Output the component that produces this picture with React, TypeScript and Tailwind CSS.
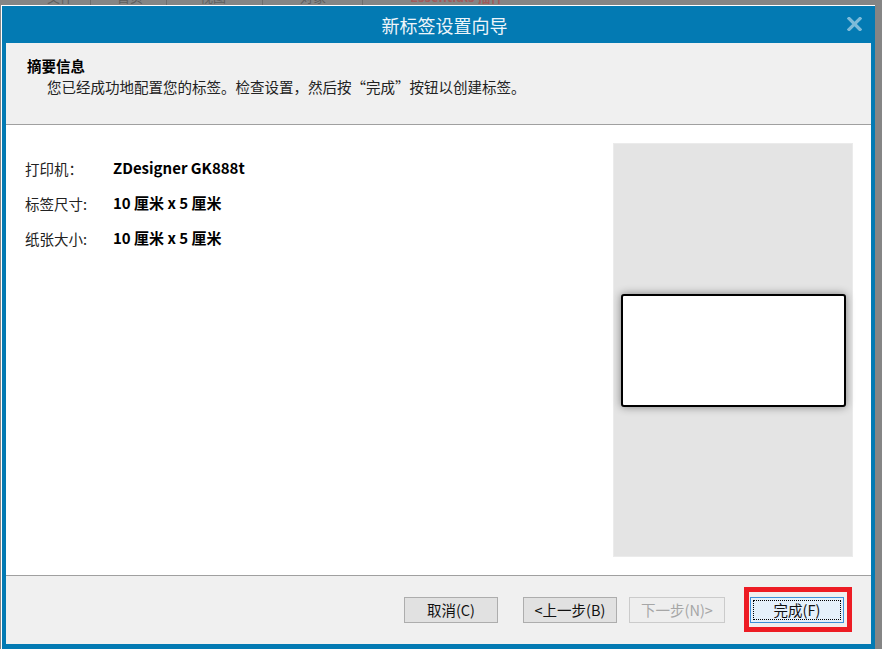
const font = { fontFamily: '"Noto Sans CJK SC", "Noto Sans", sans-serif' };

const rows = [
  { label: "打印机：", value: "ZDesigner GK888t" },
  { label: "标签尺寸:", value: "10 厘米 x 5 厘米" },
  { label: "纸张大小:", value: "10 厘米 x 5 厘米" },
];

function CloseIcon() {
  return (
    <svg width="15" height="14" viewBox="0 0 15 14" aria-hidden>
      <path d="M2 1.5 L13 12.5 M13 1.5 L2 12.5" stroke="#7ebbd9" strokeWidth="3.2" strokeLinecap="square" />
    </svg>
  );
}

function Button({
  children,
  disabled,
  focused,
}: {
  children: React.ReactNode;
  disabled?: boolean;
  focused?: boolean;
}) {
  return (
    <button
      className={
        focused
          ? "relative h-[26px] w-[94px] border border-[#3c8fd9] bg-[#e5f1fb] text-[14.5px] text-[#111]"
          : disabled
          ? "h-[26px] w-[96px] border border-[#cbcbcb] bg-[#eeeeee] text-[14.5px] text-[#a6a6a6]"
          : "h-[26px] w-[94px] border border-[#adadad] bg-[#e1e1e1] text-[14.5px] text-[#111]"
      }
    >
      {focused && (
        <span className="pointer-events-none absolute inset-[2px] border border-dotted border-black" />
      )}
      <span className="relative">{children}</span>
    </button>
  );
}

export default function App() {
  return (
    <div className="h-[649px] w-[882px] overflow-hidden bg-[#858585]" style={font}>
      {/* app toolbar behind the dialog */}
      <div className="h-[5px] overflow-hidden">
        <div className="-mt-[11px] flex h-[16px] items-center text-[13px] leading-[16px] text-[#5e5e5e]">
          <span className="ml-[47px]">文件</span>
          <span className="ml-[17px] h-[16px] w-px bg-[#6e6e6e]" />
          <span className="ml-[26px]">首页</span>
          <span className="ml-[23px] h-[16px] w-px bg-[#6e6e6e]" />
          <span className="ml-[33px]">视图</span>
          <span className="ml-[36px] h-[16px] w-px bg-[#6e6e6e]" />
          <span className="ml-[37px]">对象</span>
          <span className="ml-[36px] h-[16px] w-px bg-[#6e6e6e]" />
          <span className="ml-[47px] font-bold text-[#a05a5a]">Essentials 插件</span>
        </div>
      </div>

      <div className="ml-[1px] w-[874px] border-l border-t border-white bg-[#037ab3] px-[4px] pb-[5px]">
        {/* title bar */}
        <div className="relative flex h-[37px] items-center justify-center pl-[12px]">
          <span className="text-[18px] leading-[24px] text-[#eef5fa]">新标签设置向导</span>
          <span className="absolute right-[9px] top-[11px]">
            <CloseIcon />
          </span>
        </div>

        {/* header */}
        <div className="h-[82px] border-b border-[#a0a0a0] bg-[#f0f0f0] pl-[21px] pt-[12px] text-[14.5px] leading-[21px]">
          <div className="font-bold text-black">摘要信息</div>
          <div className="ml-[20px] text-[#222]">
            您已经成功地配置您的标签。检查设置，然后按“完成”按钮以创建标签。
          </div>
        </div>

        {/* body */}
        <div className="flex h-[450px] bg-white">
          <div className="flex-1 pl-[19px] pt-[26px]">
            {rows.map((r) => (
              <div key={r.label} className="flex h-[35px] items-center">
                <span className="w-[88px] text-[14.5px] text-[#222]">{r.label}</span>
                <span className="text-[15px] font-bold text-black">{r.value}</span>
              </div>
            ))}
          </div>
          <div className="my-[18px] mr-[18px] flex w-[240px] items-center justify-center border border-[#ebebeb] bg-[#e4e4e4] pl-[1px]">
            <div className="h-[113px] w-[225px] rounded-[3px] border-2 border-black bg-white shadow-[0_0_9px_rgba(0,0,0,0.45)]" />
          </div>
        </div>

        {/* footer */}
        <div className="flex h-[69px] items-start justify-end border-t border-[#a0a0a0] bg-[#f0f0f0] pr-[27px] pt-[21px]">
          <Button>取消(C)</Button>
          <div className="ml-[25px]">
            <Button>&lt;上一步(B)</Button>
          </div>
          <div className="ml-[12px]">
            <Button disabled>下一步(N)&gt;</Button>
          </div>
          <div className="relative ml-[25px]">
            <Button focused>完成(F)</Button>
            <span className="pointer-events-none absolute -bottom-[9px] -left-[6px] -right-[8px] -top-[10px] border-[5px] border-[#ed1c24]" />
          </div>
        </div>
      </div>
    </div>
  );
}
